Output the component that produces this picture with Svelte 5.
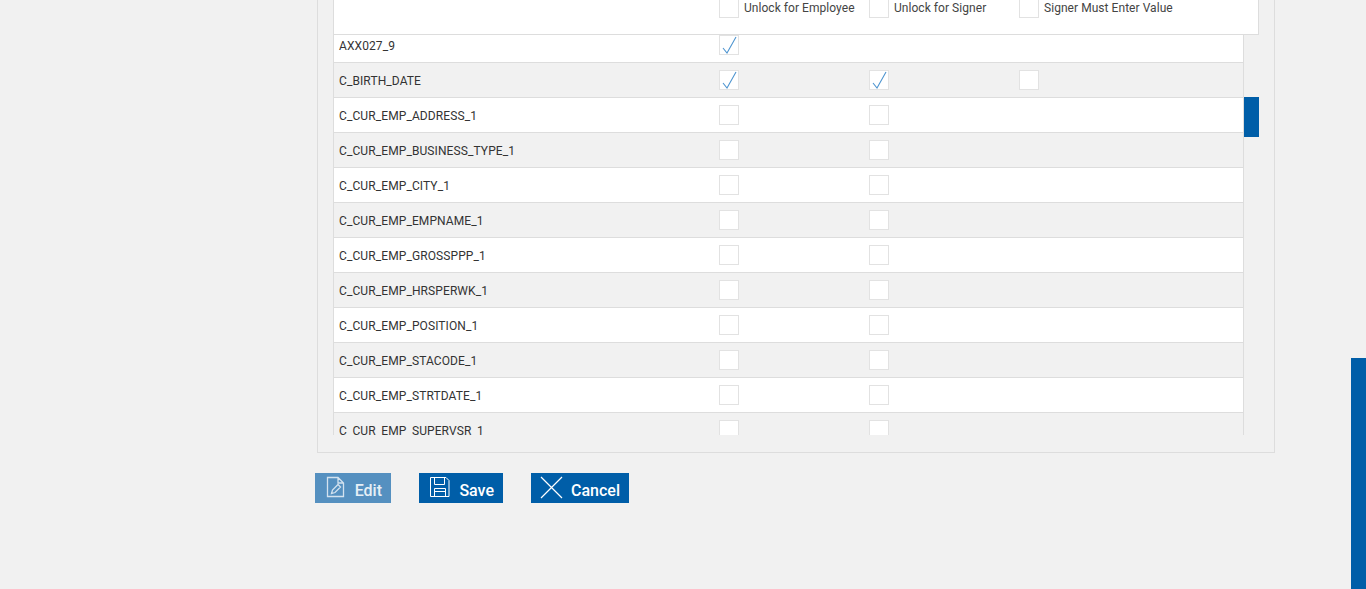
<script>
	const rows = [
		{ name: 'AXX027_9', emp: true },
		{ name: 'C_BIRTH_DATE', emp: true, signer: true, must: false },
		{ name: 'C_CUR_EMP_ADDRESS_1', emp: false, signer: false },
		{ name: 'C_CUR_EMP_BUSINESS_TYPE_1', emp: false, signer: false },
		{ name: 'C_CUR_EMP_CITY_1', emp: false, signer: false },
		{ name: 'C_CUR_EMP_EMPNAME_1', emp: false, signer: false },
		{ name: 'C_CUR_EMP_GROSSPPP_1', emp: false, signer: false },
		{ name: 'C_CUR_EMP_HRSPERWK_1', emp: false, signer: false },
		{ name: 'C_CUR_EMP_POSITION_1', emp: false, signer: false },
		{ name: 'C_CUR_EMP_STACODE_1', emp: false, signer: false },
		{ name: 'C_CUR_EMP_STRTDATE_1', emp: false, signer: false },
		{ name: 'C_CUR_EMP_SUPERVSR_1', emp: false, signer: false }
	];
	const headers = ['Unlock for Employee', 'Unlock for Signer', 'Signer Must Enter Value'];
</script>

<style>
	:global(body) {
		background: #f1f1f1;
		font-family: Roboto, "Liberation Sans", sans-serif;
		overflow: hidden;
	}
	.page {
		position: relative;
		height: 589px;
		overflow: hidden;
		padding-left: 315px;
		box-sizing: border-box;
	}
	.panel {
		width: 958px;
		height: 453px;
		margin-left: 2px;
		padding-left: 15px;
		box-sizing: border-box;
		border-left: 1px solid #ddd;
		border-right: 1px solid #ddd;
		border-bottom: 1px solid #ddd;
	}
	.table {
		position: relative;
		width: 926px;
	}
	.head {
		height: 35px;
		box-sizing: border-box;
		background: #fff;
		border-left: 1px solid #ddd;
		border-right: 1px solid #ddd;
		border-bottom: 1px solid #ddd;
		padding-left: 385px;
		display: flex;
	}
	.head-cell {
		width: 150px;
		display: flex;
		gap: 5px;
		font-size: 12px;
		letter-spacing: 0.05px;
		color: #444;
		line-height: 20px;
		margin-top: -2px;
		white-space: nowrap;
	}
	.body {
		width: 911px;
		height: 400px;
		overflow: hidden;
		box-sizing: border-box;
		border-left: 1px solid #ddd;
		border-right: 1px solid #ddd;
	}
	.row {
		height: 35px;
		box-sizing: border-box;
		border-bottom: 1px solid #ddd;
		display: flex;
		align-items: flex-start;
		background: #fff;
	}
	.row:first-child {
		margin-top: -7px;
	}
	.row:nth-child(even) {
		background: #f1f1f1;
	}
	.name {
		width: 385px;
		padding-left: 5px;
		box-sizing: border-box;
		font-size: 12px;
		letter-spacing: 0.1px;
		line-height: 36px;
		color: #333;
	}
	.cell {
		width: 150px;
		padding-top: 7px;
	}
	.box {
		display: block;
		width: 20px;
		height: 20px;
		box-sizing: border-box;
		background: #fff;
		border: 1px solid #e2e2e2;
		flex: none;
		position: relative;
	}
	.box svg {
		position: absolute;
		left: 2px;
		top: -1px;
	}
	.thumb {
		position: absolute;
		left: 911px;
		top: 97px;
		width: 15px;
		height: 40px;
		background: #005ea8;
	}
	.actions {
		display: flex;
		gap: 28px;
		margin-top: 20px;
	}
	.btn {
		height: 30px;
		background: #005ea8;
		color: #fff;
		border: 0;
		padding: 0 9px;
		font: 500 16px Roboto, sans-serif;
		display: flex;
		align-items: center;
		justify-content: space-between;
	}
	.btn span {
		padding-top: 4px;
	}
	.btn svg {
		margin-top: -2px;
		flex: none;
	}
	.btn.edit {
		background: #5590c0;
		color: #e6eff6;
		width: 76px;
		padding-left: 11px;
	}
	.btn.save {
		width: 84px;
		padding-left: 10px;
	}
	.btn.cancel {
		width: 98px;
	}
	.pagebar {
		position: absolute;
		right: 0;
		top: 358px;
		width: 15px;
		height: 231px;
		background: #005ea8;
	}
</style>

{#snippet box(checked)}
	<span class="box">
		{#if checked}
			<svg width="16" height="19" viewBox="0 0 16 19" fill="none" stroke="#4f95d0" stroke-width="1.1"><path d="M1 13 L5 18 L14 2" /></svg>
		{/if}
	</span>
{/snippet}

<div class="page">
	<div class="panel">
		<div class="table">
			<div class="head">
				{#each headers as h}
					<div class="head-cell">
						{@render box(false)}
						<span>{h}</span>
					</div>
				{/each}
			</div>
			<div class="body">
				{#each rows as r}
					<div class="row">
						<div class="name">{r.name}</div>
						<div class="cell">{#if r.emp !== undefined}{@render box(r.emp)}{/if}</div>
						<div class="cell">{#if r.signer !== undefined}{@render box(r.signer)}{/if}</div>
						<div class="cell">{#if r.must !== undefined}{@render box(r.must)}{/if}</div>
					</div>
				{/each}
			</div>
			<div class="thumb"></div>
		</div>
	</div>
	<div class="actions">
		<button class="btn edit">
			<svg width="19" height="22" viewBox="0 0 19 22" fill="none" stroke="#d3e2ef" stroke-width="1.3"><path d="M1.5 1.5H12L17.5 7V20.5H1.5Z M12 1.5V7H17.5 M5.5 17.5L6.5 14L12 8.5L14.5 11L9 16.5Z" /></svg>
			<span>Edit</span>
		</button>
		<button class="btn save">
			<svg width="21" height="22" viewBox="0 0 21 22" fill="none" stroke="#fff" stroke-width="1"><path d="M1.5 1.5H17L20 4.5V20.5H1.5Z M5.5 1.5V8.5H15.5V1.5 M5.5 20.5V12.5H16.5V20.5 M5.5 15.5H16.5" /></svg>
			<span>Save</span>
		</button>
		<button class="btn cancel">
			<svg width="23" height="23" viewBox="0 0 23 23" fill="none" stroke="#fff" stroke-width="1.2"><path d="M1 1L22 22M22 1L1 22" /></svg>
			<span>Cancel</span>
		</button>
	</div>
	<div class="pagebar"></div>
</div>
